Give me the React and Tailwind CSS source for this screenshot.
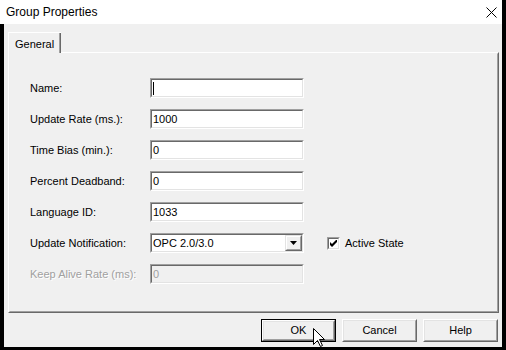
import React from 'react';

const font = "font-['Liberation_Sans',Arial,sans-serif]";

function Field({ value = '', disabled = false, caret = false }) {
  return (
    <div className="w-[154px] h-[20px] border border-t-[#a0a0a0] border-l-[#a0a0a0] border-r-white border-b-white">
      <div
        className={
          disabled
            ? 'h-full border border-t-[#696969] border-l-[#696969] border-r-[#e3e3e3] border-b-[#e3e3e3] bg-[#f0f0f0] text-[#a0a0a0] flex items-center pl-[1px] text-[11px]'
            : 'h-full border border-t-[#696969] border-l-[#696969] border-r-[#e3e3e3] border-b-[#e3e3e3] bg-white text-black flex items-center pl-[1px] text-[11px]'
        }
      >
        {caret && <div className="w-px h-[13px] bg-black" />}
        {value}
      </div>
    </div>
  );
}

function Select({ value }) {
  return (
    <div className="w-[154px] h-[20px] border border-t-[#a0a0a0] border-l-[#a0a0a0] border-r-white border-b-white">
      <div className="h-full border border-t-[#696969] border-l-[#696969] border-r-[#e3e3e3] border-b-[#e3e3e3] bg-white flex items-center text-[11px]">
        <span className="flex-1 pl-[1px]">{value}</span>
        <div className="w-[17px] h-full border border-t-[#e3e3e3] border-l-[#e3e3e3] border-r-[#696969] border-b-[#696969] bg-[#f0f0f0]">
          <div className="h-full border border-t-white border-l-white border-r-[#a0a0a0] border-b-[#a0a0a0] flex items-center justify-center">
            <svg width="7" height="4" viewBox="0 0 7 4">
              <path d="M0 0H7L3.5 4Z" fill="#000" />
            </svg>
          </div>
        </div>
      </div>
    </div>
  );
}

function Btn({ label, def = false }) {
  return (
    <div className={def ? 'w-[75px] h-[23px] border border-black' : 'w-[75px] h-[23px]'}>
      <div className="h-full border border-t-white border-l-white border-r-[#696969] border-b-[#696969]">
        <div className="h-full border border-t-[#e3e3e3] border-l-[#e3e3e3] border-r-[#a0a0a0] border-b-[#a0a0a0] flex items-center justify-center text-[11px] text-black">
          {label}
        </div>
      </div>
    </div>
  );
}

const rows = [
  { label: 'Name:', value: '', caret: true },
  { label: 'Update Rate (ms.):', value: '1000' },
  { label: 'Time Bias (min.):', value: '0' },
  { label: 'Percent Deadband:', value: '0' },
  { label: 'Language ID:', value: '1033' },
];

export default function App() {
  return (
    <div className={`relative w-[506px] h-[350px] bg-black flex flex-col ${font} text-black`}>
      {/* title bar */}
      <div className="h-[24px] mr-[4px] bg-white flex items-center justify-between pl-[6px] pr-[5px] text-[12px]">
        <span>Group Properties</span>
        <svg width="11" height="11" viewBox="0 0 11 11">
          <path d="M0.5 0.5L10.5 10.5M10.5 0.5L0.5 10.5" stroke="#000" strokeWidth="1" />
        </svg>
      </div>

      <div className="flex-1 ml-[4px] mr-[4px] mb-[3px] bg-[#f0f0f0] flex flex-col pt-[8px] pl-[4px] pr-[3px]">
        {/* tab */}
        <div className="flex">
          <div className="relative z-10 -mb-px w-[53px] h-[21px] bg-[#f0f0f0] border-t border-l border-t-white border-l-white flex">
            <span className="flex-1 pl-[6px] pt-[3px] text-[11px]">General</span>
            <div className="w-px bg-[#a0a0a0]" />
            <div className="w-px bg-[#696969]" />
          </div>
        </div>

        {/* panel */}
        <div className="h-[261px] border border-t-white border-l-white border-r-[#696969] border-b-[#696969]">
          <div className="h-full border border-transparent border-r-[#a0a0a0] border-b-[#a0a0a0] pt-[24px] pl-[20px] flex flex-col gap-[11px] text-[11px]">
            {rows.map((r) => (
              <div key={r.label} className="flex items-center h-[20px]">
                <span className="w-[120px]">{r.label}</span>
                <Field value={r.value} caret={r.caret} />
              </div>
            ))}
            <div className="flex items-center h-[20px]">
              <span className="w-[120px]">Update Notification:</span>
              <Select value="OPC 2.0/3.0" />
              <div className="ml-[23px] flex items-center gap-[5px]">
                <div className="w-[13px] h-[13px] border border-t-[#a0a0a0] border-l-[#a0a0a0] border-r-white border-b-white">
                  <div className="h-full border border-t-[#696969] border-l-[#696969] border-r-[#e3e3e3] border-b-[#e3e3e3] bg-white flex items-center justify-center">
                    <svg width="7" height="7" viewBox="0 0 7 7">
                      <path d="M0 2L0 5L2 7L7 2L7 -1L2 4Z" fill="#000" />
                    </svg>
                  </div>
                </div>
                <span>Active State</span>
              </div>
            </div>
            <div className="flex items-center h-[20px]">
              <span className="w-[120px] text-[#a0a0a0] [text-shadow:1px_1px_0_#fff]">Keep Alive Rate (ms):</span>
              <Field value="0" disabled />
            </div>
          </div>
        </div>

        {/* buttons */}
        <div className="mt-[6px] flex justify-end gap-[6px] pr-[1px]">
          <Btn label="OK" def />
          <Btn label="Cancel" />
          <Btn label="Help" />
        </div>
      </div>

      {/* mouse pointer */}
      <svg className="absolute left-[313px] top-[328px]" width="13" height="20" viewBox="0 0 13 20">
        <path d="M0.5 0.5V16.5L4.5 12.5L7.5 18.5L9.5 17.5L6.5 11.5H11.5Z" fill="#fff" stroke="#000" strokeWidth="1" strokeLinejoin="miter" />
      </svg>
    </div>
  );
}
